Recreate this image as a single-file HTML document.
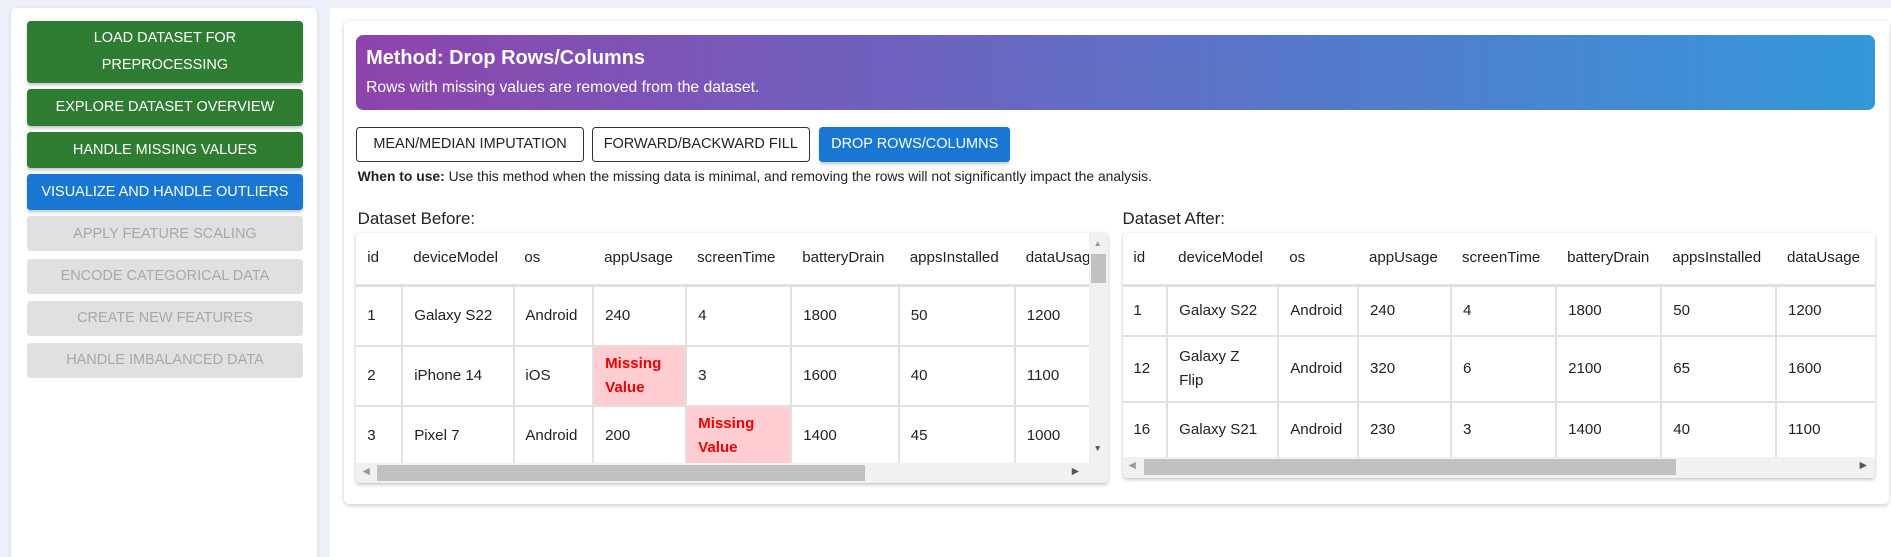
<!DOCTYPE html>
<html><head><meta charset="utf-8"><style>
html,body{margin:0;padding:0;width:1891px;height:557px;overflow:hidden;background:#edf0fa;}
#w{position:relative;width:1565px;height:461px;zoom:1.20831;font-family:"Liberation Sans",sans-serif;color:#222;}
.a{position:absolute;box-sizing:border-box;}
.sb{left:9px;top:7px;width:253px;height:460px;background:#fff;border-radius:4px;box-shadow:0 1px 3px rgba(0,0,0,.15);}
.btn{left:22px;width:229px;border-radius:3px;color:#fff;font-size:12px;text-align:center;display:flex;align-items:center;justify-content:center;line-height:22px;box-shadow:0 2px 2px rgba(0,0,0,.2);}
.g{background:#2e7d32}.b{background:#1976d2}.d{background:#e0e0e0;color:#a8a8a8;box-shadow:none}
.mp{left:273px;top:7px;width:1292px;height:460px;background:#fff;}
.card{left:285px;top:17px;width:1278px;height:400px;background:#fff;border-radius:4px;box-shadow:0 1px 4px rgba(0,0,0,.2);}
.hd{left:295px;top:29px;width:1257px;height:62px;border-radius:6px;background:linear-gradient(90deg,#8e44ad,#3498db);color:#fff;}
.ob{top:105px;height:29px;border:1px solid #333;border-radius:3px;font-size:12px;display:flex;align-items:center;justify-content:center;background:#fff;}
table{border-collapse:collapse;table-layout:fixed;font-size:12.5px;}
td{border:2px solid #e0e0e0;padding:0 0 0 9px;vertical-align:middle;line-height:20px;white-space:nowrap;overflow:hidden;}
tr.h td{border:none;border-bottom:3px solid #e0e0e0;}
td:first-child{border-left:none}
.m{background:#ffcdd2;color:#e00;font-weight:bold;}
.tb{background:#fff;overflow:hidden;box-shadow:0 1px 3px rgba(0,0,0,.25);border-radius:3px;}
.hs{background:#f1f1f1;}
.th{background:#c1c1c1;}
</style></head><body><div id="w">
<div class="a sb"></div>
<div class="a btn g" style="top:17px;height:52px;">LOAD DATASET FOR<br>PREPROCESSING</div>
<div class="a btn g" style="top:74px;height:30px;">EXPLORE DATASET OVERVIEW</div>
<div class="a btn g" style="top:109px;height:30px;">HANDLE MISSING VALUES</div>
<div class="a btn b" style="top:144px;height:30px;">VISUALIZE AND HANDLE OUTLIERS</div>
<div class="a btn d" style="top:179px;height:29px;">APPLY FEATURE SCALING</div>
<div class="a btn d" style="top:214px;height:29px;">ENCODE CATEGORICAL DATA</div>
<div class="a btn d" style="top:249px;height:29px;">CREATE NEW FEATURES</div>
<div class="a btn d" style="top:284px;height:29px;">HANDLE IMBALANCED DATA</div>
<div class="a mp"></div>
<div class="a card"></div>
<div class="a hd"><div style="position:absolute;left:8px;top:10px;font-size:16.5px;font-weight:bold;">Method: Drop Rows/Columns</div><div style="position:absolute;left:8px;top:36px;font-size:13px;">Rows with missing values are removed from the dataset.</div></div>
<div class="a ob" style="left:295px;width:188px;">MEAN/MEDIAN IMPUTATION</div>
<div class="a ob" style="left:490px;width:180px;">FORWARD/BACKWARD FILL</div>
<div class="a ob" style="left:678px;width:158px;background:#1976d2;color:#fff;border-color:#1976d2;box-shadow:0 2px 2px rgba(0,0,0,.2);">DROP ROWS/COLUMNS</div>
<div class="a" style="left:296px;top:139px;font-size:11.5px;"><b>When to use:</b> Use this method when the missing data is minimal, and removing the rows will not significantly impact the analysis.</div>
<div class="a" style="left:296px;top:173px;font-size:14px;">Dataset Before:</div>
<div class="a" style="left:929px;top:173px;font-size:14px;">Dataset After:</div>

<div class="a tb" style="left:295px;top:193px;width:622px;height:207px;">
<div class="a" style="left:0;top:0;width:606px;height:190px;overflow:hidden;">
<table style="width:660px;"><colgroup><col style="width:38px"><col style="width:92px"><col style="width:66px"><col style="width:77px"><col style="width:87px"><col style="width:89px"><col style="width:96px"><col style="width:115px"></colgroup>
<tr class="h" style="height:43px"><td>id</td><td>deviceModel</td><td>os</td><td>appUsage</td><td>screenTime</td><td>batteryDrain</td><td>appsInstalled</td><td>dataUsage</td></tr>
<tr style="height:50px"><td>1</td><td>Galaxy S22</td><td>Android</td><td>240</td><td>4</td><td>1800</td><td>50</td><td>1200</td></tr>
<tr style="height:50px"><td>2</td><td>iPhone 14</td><td>iOS</td><td class="m">Missing<br>Value</td><td>3</td><td>1600</td><td>40</td><td>1100</td></tr>
<tr style="height:50px"><td>3</td><td>Pixel 7</td><td>Android</td><td>200</td><td class="m">Missing<br>Value</td><td>1400</td><td>45</td><td>1000</td></tr>
</table></div>
<div class="a hs" style="left:606px;top:0;width:16px;height:207px;"><div class="a th" style="left:2px;top:17px;width:12px;height:24px;"></div><div class="a" style="left:4px;top:4px;font-size:7px;color:#999;">▲</div><div class="a" style="left:4px;top:174px;font-size:7px;color:#555;">▼</div></div>
<div class="a hs" style="left:0;top:190px;width:606px;height:17px;"><div class="a th" style="left:17px;top:2px;width:404px;height:13px;"></div><div class="a" style="left:5px;top:3px;font-size:8px;color:#999;">◀</div><div class="a" style="left:592px;top:3px;font-size:8px;color:#555;">▶</div></div>
</div>

<div class="a tb" style="left:929px;top:193px;width:623px;height:203px;">
<div class="a" style="left:0;top:0;width:623px;height:185px;overflow:hidden;">
<table style="width:640px;"><colgroup><col style="width:37px"><col style="width:92px"><col style="width:66px"><col style="width:77px"><col style="width:87px"><col style="width:87px"><col style="width:95px"><col style="width:99px"></colgroup>
<tr class="h" style="height:43px"><td>id</td><td>deviceModel</td><td>os</td><td>appUsage</td><td>screenTime</td><td>batteryDrain</td><td>appsInstalled</td><td>dataUsage</td></tr>
<tr style="height:42px"><td>1</td><td>Galaxy S22</td><td>Android</td><td>240</td><td>4</td><td>1800</td><td>50</td><td>1200</td></tr>
<tr style="height:55px"><td>12</td><td>Galaxy Z<br>Flip</td><td>Android</td><td>320</td><td>6</td><td>2100</td><td>65</td><td>1600</td></tr>
<tr style="height:46px"><td>16</td><td>Galaxy S21</td><td>Android</td><td>230</td><td>3</td><td>1400</td><td>40</td><td>1100</td></tr>
</table></div>
<div class="a hs" style="left:0;top:185px;width:623px;height:18px;"><div class="a th" style="left:18px;top:2px;width:440px;height:13px;"></div><div class="a" style="left:5px;top:3px;font-size:8px;color:#999;">◀</div><div class="a" style="left:610px;top:3px;font-size:8px;color:#555;">▶</div></div>
</div>
</div></body></html>
